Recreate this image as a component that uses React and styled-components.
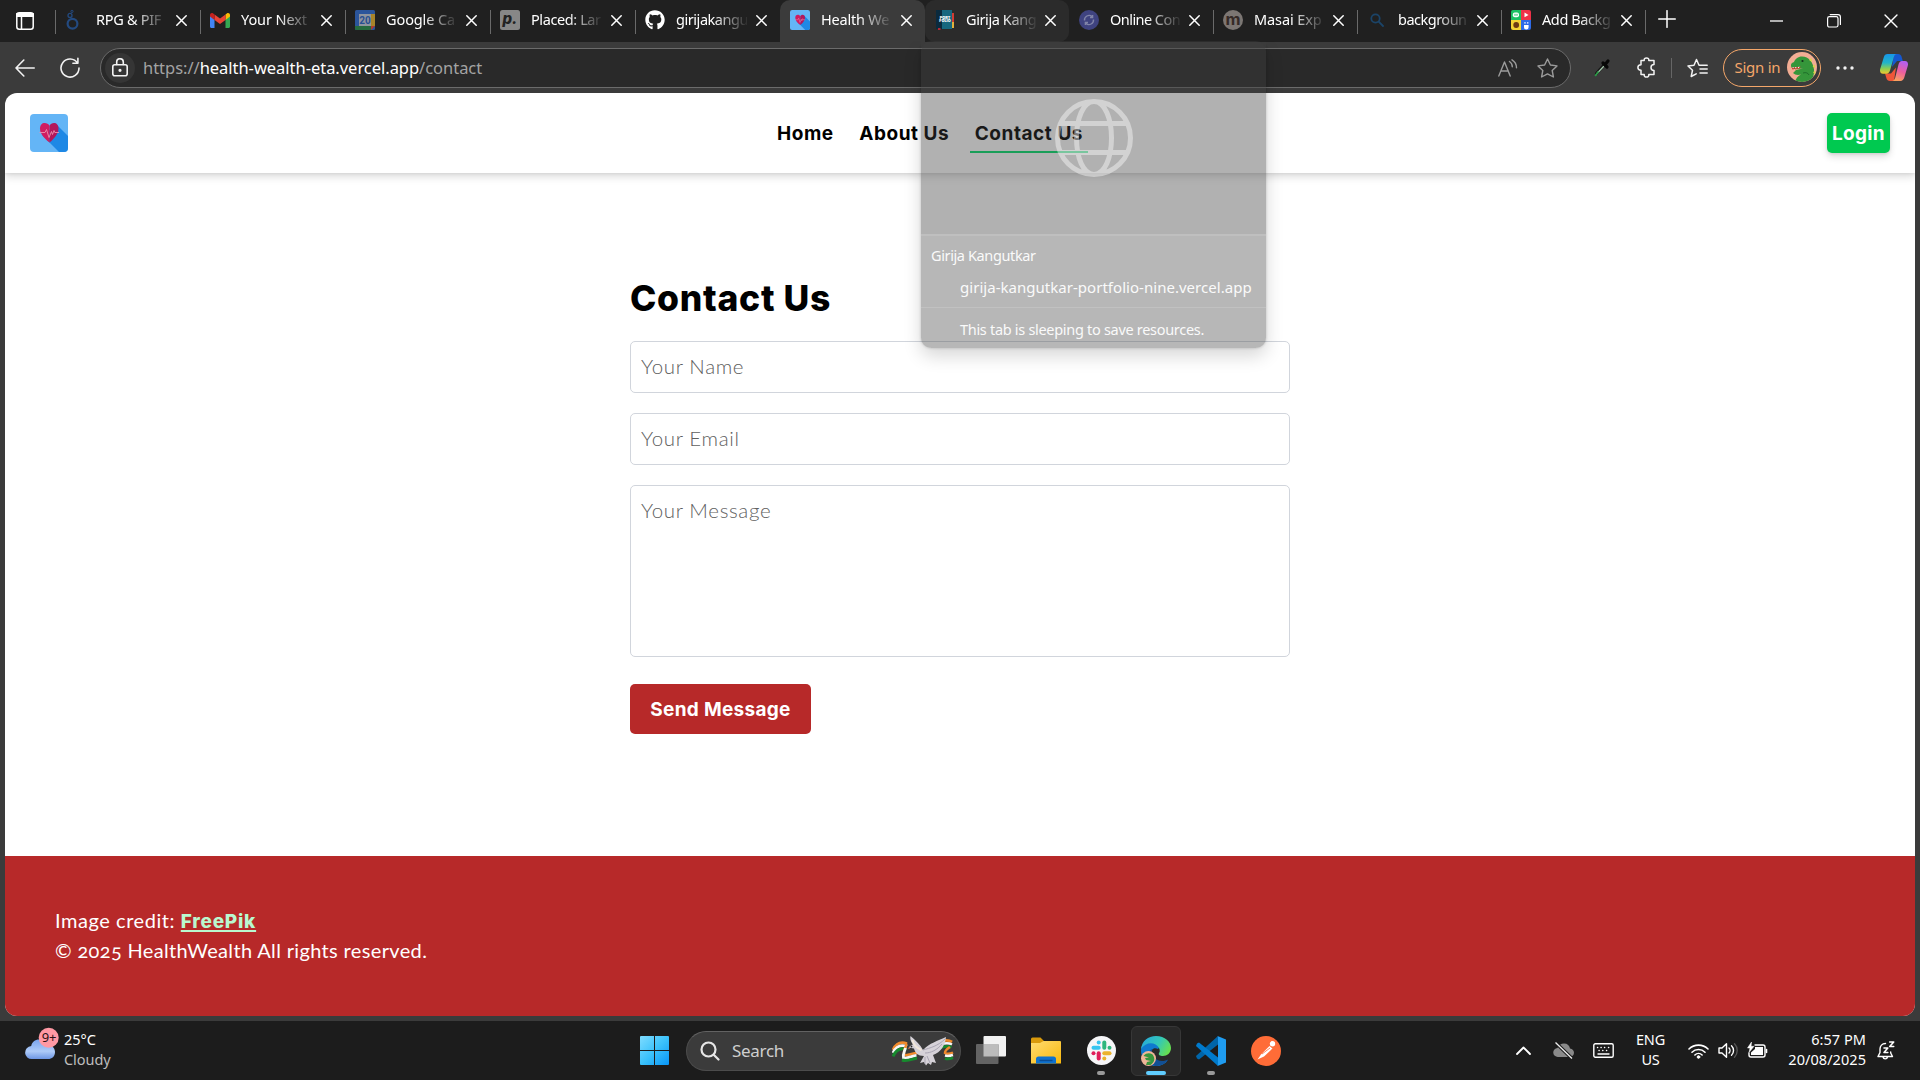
import React from "react";
import styled, { createGlobalStyle, css } from "styled-components";
import { FaGithub } from "react-icons/fa";

const ui = `"Noto Sans", "Open Sans", sans-serif`;
const display = `Inter, "Work Sans", sans-serif`;
const body = `Lato, Raleway, sans-serif`;

const Global = createGlobalStyle`
  * { box-sizing: border-box; }
  body { margin: 0; background: #3b3b3b; overflow: hidden; }
  svg { display: block; flex: none; }
`;

const Screen = styled.div`
  width: 1920px;
  height: 1080px;
  display: flex;
  flex-direction: column;
  overflow: hidden;
  position: relative;
  background: #3b3b3b;
  font-family: ${ui};
`;

/* ---------- tab strip ---------- */
const TabStrip = styled.div`
  height: 42px;
  flex: none;
  display: flex;
  background: #202020;
  color: #fff;
`;
const Slot = styled.div`
  width: ${(p) => p.$w}px;
  height: 100%;
  flex: none;
  display: flex;
  align-items: center;
  justify-content: center;
`;
const WorkspaceSlot = styled(Slot)`
  padding-right: 5px;
`;
const separator = css`
  background: linear-gradient(#6a6a6a, #6a6a6a) 0 10px / 1px 24px no-repeat;
`;
const Tab = styled.div`
  width: ${(p) => p.$w}px;
  flex: none;
  display: flex;
  align-items: center;
  padding: 0 13px 2px 10px;
  ${(p) => p.$line && separator}
  ${(p) =>
    p.$fill &&
    css`
      background: ${p.$fill};
      border-radius: ${p.$radius};
    `}
`;
const NewTab = styled(Slot)`
  ${separator}
  padding-bottom: 4px;
`;
const Favicon = styled.div`
  width: 20px;
  height: 20px;
  flex: none;
  display: flex;
  align-items: center;
  justify-content: center;
`;
const TabTitle = styled.div`
  width: 71px;
  margin: -2px 0 0 11px;
  white-space: nowrap;
  font-size: 14.5px;
  letter-spacing: ${(p) => p.$ls || "-0.2px"};
  line-height: 20px;
  mask-image: linear-gradient(90deg, #000 52%, rgba(0, 0, 0, 0.08) 98%);
`;
const TabClose = styled.div`
  margin-left: auto;
`;
const WindowControls = styled.div`
  margin-left: auto;
  display: flex;
`;

/* ---------- toolbar ---------- */
const Toolbar = styled.div`
  height: 51px;
  flex: none;
  display: flex;
  align-items: center;
  color: #f2f2f2;
`;
const AddressBar = styled.div`
  width: 1471px;
  height: 40px;
  flex: none;
  display: flex;
  align-items: center;
  border: 1px solid #6b6b6b;
  border-radius: 20px;
  background: #292929;
  padding: 0 3px 0 4px;
`;
const LockBadge = styled.div`
  width: 30px;
  height: 30px;
  border-radius: 50%;
  background: #353535;
  display: flex;
  align-items: center;
  justify-content: center;
`;
const Url = styled.div`
  margin-left: 8px;
  flex: 1;
  color: #a3a3a3;
  font-size: 16.5px;
  line-height: 24px;
  letter-spacing: -0.03px;
  white-space: nowrap;
  b {
    font-weight: 400;
    color: #fff;
  }
`;
const Divider = styled.div`
  width: 1px;
  height: 20px;
  background: #666;
`;
const SignIn = styled.div`
  width: 98px;
  height: 38px;
  border: 1.5px solid #f5a76a;
  border-radius: 19px;
  display: flex;
  align-items: center;
  justify-content: space-between;
  padding: 0 3px 1px 11px;
  color: #f5a76a;
  font-size: 15px;
  letter-spacing: -0.25px;
  white-space: nowrap;
`;

/* ---------- page ---------- */
const Viewport = styled.div`
  height: 923px;
  flex: none;
  margin: 0 5px;
  border-radius: 12px;
  overflow: hidden;
  background: #fff;
  display: flex;
  flex-direction: column;
`;
const NavBar = styled.header`
  height: 80px;
  flex: none;
  display: grid;
  grid-template-columns: 1fr auto 1fr;
  align-items: center;
  padding: 0 25px;
  box-shadow: 0 4px 8px rgba(0, 0, 0, 0.13), 0 1px 3px rgba(0, 0, 0, 0.08);
`;
const NavLinks = styled.nav`
  display: flex;
  gap: 15.5px;
  transform: translateX(-30px);
`;
const NavLink = styled.a`
  height: 40px;
  padding: 0 5px;
  font: 700 19px/41px ${display};
  letter-spacing: 0.55px;
  color: #000;
  border-bottom: 2px solid ${(p) => (p.$active ? "#00e06a" : "transparent")};
  white-space: nowrap;
`;
const LoginButton = styled.button`
  justify-self: end;
  width: 63px;
  height: 40px;
  border: 0;
  padding: 0;
  border-radius: 5px;
  background: #00c950;
  color: #fff;
  font: 700 19px ${display};
  letter-spacing: 0.3px;
  box-shadow: 0 4px 7px rgba(0, 0, 0, 0.13), 0 1px 3px rgba(0, 0, 0, 0.1);
`;
const Main = styled.main`
  height: 683px;
  flex: none;
  display: flex;
  flex-direction: column;
  width: 660px;
  margin: 0 auto;
  padding-top: 103px;
`;
const Heading = styled.h1`
  margin: 0 0 20px;
  height: 45px;
  font: 800 35.5px/45px ${display};
  letter-spacing: 0.7px;
  color: #000;
`;
const Form = styled.form`
  display: flex;
  flex-direction: column;
  gap: 20px;
`;
const field = css`
  width: 100%;
  border: 1px solid #d1d5dc;
  border-radius: 5px;
  padding: 0 10px 2px;
  background: #fff;
  outline: none;
  font: 300 20.5px/30px ${body};
  letter-spacing: 0.65px;
  resize: none;
  display: block;
  &::placeholder {
    color: #606060;
    opacity: 1;
  }
`;
const Input = styled.input`
  ${field}
  height: 52px;
`;
const TextArea = styled.textarea`
  ${field}
  height: 172px;
  padding-top: 9px;
`;
const SendButton = styled.button`
  margin-top: 7px;
  width: 181px;
  height: 50px;
  border: 0;
  border-radius: 5px;
  padding: 0;
  background: #b72929;
  color: #fff;
  font: 700 19px ${display};
  letter-spacing: 0.3px;
`;
const Footer = styled.footer`
  flex: 1;
  background: #b72929;
  color: #fff;
  padding: 49px 50px;
  font: 400 20px/30px ${body};
  p {
    margin: 0;
  }
`;
const Credit = styled.p`
  letter-spacing: 0.55px;
`;
const Rights = styled.p`
  line-height: 27px;
  letter-spacing: 0.35px;
  font-variant-numeric: oldstyle-nums;
`;
const CreditLink = styled.a`
  color: #b9f8cf;
  font: 800 19px/30px ${display};
  letter-spacing: 0.75px;
  text-decoration: underline;
  text-decoration-thickness: 2px;
  text-underline-offset: 2px;
`;

/* ---------- tab hover card ---------- */
const HoverCard = styled.aside`
  position: absolute;
  left: 921px;
  top: 41px;
  width: 345px;
  height: 307px;
  border-radius: 10px;
  overflow: hidden;
  display: flex;
  flex-direction: column;
  color: #fafafa;
  font-size: 14.5px;
  line-height: 20px;
  white-space: nowrap;
`;
const CardShadow = styled.div`
  position: absolute;
  left: 921px;
  top: 41px;
  width: 345px;
  height: 307px;
  border-radius: 10px;
  box-shadow: 0 8px 18px rgba(0, 0, 0, 0.16), 0 0 3px rgba(0, 0, 0, 0.2);
  clip-path: polygon(
    -40px 0, -40px 350px, 0 350px, 0 0, 345px 0, 345px 297px, 335px 307px,
    10px 307px, 0 297px, 0 350px, 390px 350px, 390px 0
  );
`;
const CardPreview = styled.div`
  height: 193px;
  flex: none;
  background: rgba(62, 62, 62, 0.404);
  display: flex;
  justify-content: center;
  padding-top: 58px;
`;
const CardInfo = styled.div`
  height: 73px;
  flex: none;
  background: rgba(77, 77, 77, 0.404);
  border-top: 2px solid rgba(255, 255, 255, 0.12);
  padding: 9px 0 0 10px;
`;
const CardTitle = styled.div`
  letter-spacing: -0.38px;
`;
const CardHost = styled.div`
  padding: 12px 0 0 29px;
  font-size: 15px;
  letter-spacing: 0.03px;
`;
const CardStatus = styled.div`
  flex: 1;
  background: rgba(77, 77, 77, 0.404);
  border-top: 1px solid rgba(255, 255, 255, 0.14);
  padding: 10.5px 0 0 39px;
  letter-spacing: -0.3px;
`;

/* ---------- taskbar ---------- */
const TaskBar = styled.div`
  height: 59px;
  margin-top: auto;
  flex: none;
  display: flex;
  align-items: center;
  background: #1c1c1c;
  color: #fff;
`;
const Weather = styled.div`
  width: 629px;
  height: 100%;
  flex: none;
  display: flex;
  padding: 5px 0 0 24px;
`;
const WeatherText = styled.div`
  margin-left: 3px;
  padding-top: 3px;
  font-size: 14.5px;
  line-height: 20.3px;
  letter-spacing: -0.05px;
  span {
    display: block;
    color: #bdbdbd;
  }
`;
const SearchBox = styled.div`
  width: 275px;
  height: 40px;
  margin: 0 5px 0 7px;
  border-radius: 20px;
  border: 1px solid #4c4c4c;
  border-top-color: #626262;
  background: #3b3b3b;
  display: flex;
  align-items: center;
  padding: 0 6px 0 13px;
  color: #cfcfcf;
  font-size: 17px;
  letter-spacing: -0.3px;
`;
const SearchLabel = styled.span`
  flex: 1;
  margin-left: 12px;
`;
const TaskApp = styled.div`
  width: 50px;
  height: 50px;
  margin-right: 5px;
  flex: none;
  display: flex;
  flex-direction: column;
  align-items: center;
  justify-content: space-between;
  padding-top: 9px;
  border-radius: 6px;
  border: 1px solid ${(p) => (p.$active ? "#373737" : "transparent")};
  background: ${(p) => (p.$active ? "#292929" : "transparent")};
`;
const Running = styled.div`
  width: ${(p) => (p.$active ? 20 : 8)}px;
  height: 4px;
  border-radius: 2px;
  background: ${(p) => (p.$active ? "#60cdff" : "#9a9a9a")};
`;
const Tray = styled.div`
  margin-left: auto;
  height: 100%;
  display: flex;
  align-items: center;
  padding-right: 14px;
`;
const Language = styled.div`
  width: 60px;
  padding: 0 5px 3px 0;
  text-align: center;
  font-size: 14.5px;
  line-height: 20px;
  letter-spacing: -0.2px;
`;
const Clock = styled.div`
  width: 93px;
  padding-bottom: 4px;
  text-align: right;
  font-size: 14.5px;
  line-height: 20px;
  letter-spacing: 0.05px;
  white-space: nowrap;
`;

/* ---------- drawings ---------- */
const line = (w = 1.5) => ({
  fill: "none",
  stroke: "currentColor",
  strokeWidth: w,
  strokeLinecap: "round",
  strokeLinejoin: "round",
});

const Cross = ({ size = 11, w = 1.5 }) => (
  <svg width={size} height={size} viewBox="0 0 11 11" {...line(w)}>
    <path d="M.8.8l9.4 9.4M10.2.8L.8 10.2" />
  </svg>
);

const HeartLogo = ({ size }) => (
  <svg width={size} height={size} viewBox="0 0 38 38">
    <clipPath id={"hl" + size}>
      <rect width="38" height="38" rx="4" />
    </clipPath>
    <g clipPath={"url(#hl" + size + ")"}>
      <rect width="38" height="38" fill="#64b5f6" />
      <path d="M27 11L38 22V38H29L12 21z" fill="#1e88e5" />
      <path d="M19.500 28.500C13 23.500 10 19 10 14.500 10 11 12 9 14.700 9c2 0 3.800 1 4.800 2.800z" fill="#d01c60" />
      <path d="M19.500 28.500c6-5 9-9.500 9-14C28.500 11 26.500 9 24 9c-2 0-3.600 1-4.500 2.800z" fill="#b3175b" />
      <path d="M9.500 18.500h5.500l1.500-3 2.500 8 2.500-6 1 3 1.500-4 .8 2H29" fill="none" stroke="#eb8fae" strokeWidth=".9" />
    </g>
  </svg>
);

const RingIcon = () => (
  <svg width="20" height="22" viewBox="0 0 20 22" fill="none" stroke="#234a80">
    <circle cx="7.500" cy="14.800" r="4.900" strokeWidth="2.200" />
    <circle cx="5" cy="6.400" r="2" strokeWidth="1.300" />
    <circle cx="7" cy="2.400" r="1.100" strokeWidth="1" />
  </svg>
);
const GmailIcon = () => (
  <svg width="20" height="15" viewBox="0 0 20 15">
    <path d="M0 2v11.500C0 14.300.6 15 1.500 15H4.500V6L0 2z" fill="#4285f4" />
    <path d="M20 2v11.500c0 .8-.6 1.500-1.500 1.500h-3V6L20 2z" fill="#34a853" />
    <path d="M15.500 1.500V7L20 3.600V2c0-1.700-1.800-2.500-3.200-1.500z" fill="#fbbc04" />
    <path d="M4.500 1.500V7L10 11l5.500-4V1.500L10 5.600z" fill="#ea4335" />
    <path d="M4.500 1.500V7L0 3.600V2C0 .3 1.800-.5 3.200.5z" fill="#c5221f" />
  </svg>
);
const CalendarIcon = () => (
  <svg width="20" height="20" viewBox="0 0 20 20">
    <rect width="20" height="20" rx="1.500" fill="#2b559b" />
    <rect x="16" y="4" width="4" height="12" fill="#a8842a" />
    <path d="M0 16h16v4H1.500A1.500 1.500 0 010 18.500z" fill="#266b3e" />
    <path d="M16 16h4l-4 4z" fill="#b43a2f" />
    <rect x="4" y="4" width="12" height="12" fill="#8f959f" />
    <text x="10" y="13.600" fontSize="10" fontWeight="700" fontFamily="Roboto, sans-serif" textAnchor="middle" fill="#274f92">20</text>
  </svg>
);
const PlacedIcon = () => (
  <svg width="20" height="20" viewBox="0 0 20 20">
    <rect width="20" height="20" rx="2.500" fill="#878787" />
    <text x="10" y="13.500" fontSize="15" fontWeight="800" fontStyle="italic" fontFamily="Inter, sans-serif" textAnchor="middle" fill="#222">p.</text>
  </svg>
);
const PortfolioIcon = () => (
  <svg width="19" height="20" viewBox="0 0 19 20">
    <rect width="10" height="19" fill="#0a2a3e" />
    <rect x="6" width="10" height="19" fill="#17677f" />
    <path d="M16 3h2v9h-2z" fill="#d23b33" />
    <path d="M16 12h2v6h-2z" fill="#e0b13d" />
    <rect x="2" y="18" width="2.500" height="2" fill="#b12a35" />
    <text x="9" y="8.600" fontSize="3.800" fontWeight="900" fontFamily="Inter, sans-serif" textAnchor="middle" fill="#fff">PORT</text>
    <text x="9" y="12.400" fontSize="3.800" fontWeight="900" fontFamily="Inter, sans-serif" textAnchor="middle" fill="#fff">FOLIO</text>
  </svg>
);
const SyncIcon = () => (
  <svg width="20" height="20" viewBox="0 0 20 20">
    <circle cx="10" cy="10" r="10" fill="#3f4380" />
    <path d="M5.500 10.500a4.600 4.600 0 017.500-4M14.500 9.500a4.600 4.600 0 01-7.500 4M11 7.500h2.600V5M9 12.500H6.400V15" fill="none" stroke="#8084a8" strokeWidth="1.400" />
  </svg>
);
const MasaiIcon = () => (
  <svg width="20" height="20" viewBox="0 0 20 20">
    <circle cx="10" cy="10" r="10" fill="#7c7673" />
    <text x="10" y="14.800" fontSize="16.500" fontWeight="700" fontFamily="Inter, sans-serif" textAnchor="middle" fill="#352a27">m</text>
  </svg>
);
const BlueSearch = () => (
  <svg width="14" height="14" viewBox="0 0 14 14" fill="none" stroke="#1b4468" strokeWidth="1.800" strokeLinecap="round">
    <circle cx="5.500" cy="5.500" r="4.200" />
    <path d="M8.700 8.700L13 13" />
  </svg>
);
const QuadIcon = () => (
  <svg width="20" height="20" viewBox="0 0 20 20">
    <path d="M0 2a2 2 0 012-2h8v10H0z" fill="#1bc063" />
    <path d="M10 0H18a2 2 0 012 2v8H10z" fill="#ef3148" />
    <path d="M0 10h10V20H2a2 2 0 01-2-2z" fill="#f3d435" />
    <path d="M10 10H20V18a2 2 0 01-2 2h-8z" fill="#2f6be8" />
    <rect x="1.800" y="2.500" width="6.200" height="4.800" rx="2" fill="#fff" />
    <path d="M4 3.800v2M6 3.800v2" stroke="#1bc063" />
    <path d="M13.500 2.500v4.700l4-2.300z" fill="#fff" />
    <circle cx="5.200" cy="15" r="2.900" fill="#6b3a13" />
    <path d="M13 15h4.600v2.300a2.300 2.300 0 01-4.600 0zM13.300 12.300h1.400v1.300h-1.400zM16 12.300h1.400v1.300H16z" fill="#fff" />
  </svg>
);

const Dino = ({ size }) => (
  <svg width={size} height={size} viewBox="0 0 30 30">
    <clipPath id={"dn" + size}>
      <circle cx="15" cy="15" r="15" />
    </clipPath>
    <g clipPath={"url(#dn" + size + ")"}>
      <rect width="30" height="30" fill="#f2ad94" />
      <path d="M7 10c1-3 4-5.500 8-5.500 7 0 11 6 12 13 .5 5-1 9-4 12.500H8c1-4 3-6 6-7.500-3 1-6 .5-8-1.500l3-3 7-1.500-9 .5c-3-1-4-4-2-6z" fill="#35963a" />
      <path d="M5 15.500l1 1.800 1.500-2 1.300 2 1.400-2.300 1.500 2 1.400-2.300" fill="#fff" stroke="#d6372c" strokeWidth="1" />
      <circle cx="15.500" cy="9" r="1.100" fill="#14301a" />
      <path d="M22 8l2.500-2 .5 4zM25.500 14l2.500-1.500v4zM26 20l2.500-1-.5 4z" fill="#d9d54a" />
      <path d="M16 21c3-1 5 0 6 2" fill="none" stroke="#1f6f2a" />
    </g>
  </svg>
);

const CopilotIcon = () => (
  <svg width="28" height="27" viewBox="0 0 28 27">
    <defs>
      <linearGradient id="cpA" x1="0" y1="0" x2="0" y2="1">
        <stop offset="0" stopColor="#1795e8" />
        <stop offset=".45" stopColor="#22b5c9" />
        <stop offset=".75" stopColor="#8fcf50" />
        <stop offset="1" stopColor="#f0c52f" />
      </linearGradient>
      <linearGradient id="cpB" x1=".6" y1="0" x2=".3" y2="1">
        <stop offset="0" stopColor="#b45ff0" />
        <stop offset=".5" stopColor="#ec5f9e" />
        <stop offset="1" stopColor="#fba35c" />
      </linearGradient>
    </defs>
    <path d="M14 0h4c2 0 3 1 3.500 2.500L22.800 7H17l-5 6z" fill="#1557cf" />
    <path d="M14 27h-4c-2 0-3-1-3.500-2.500L5 19.500h6l5-6z" fill="#ef5638" />
    <path d="M7.500 0H17c-1.700 0-2.600 1.200-3.200 3.200L10 16.500c-.6 2-1.700 3.200-3.500 3.200H3C.6 19.700-.5 17.500.2 15L3.800 3.200C4.400 1.200 5.600 0 7.500 0z" fill="url(#cpA)" />
    <path d="M20.500 27H12c1.700 0 2.600-1.200 3.200-3.200L18.500 10.500c.6-2 1.700-3.500 3.500-3.500h3c2.400 0 3.500 2.200 2.800 4.700L24.200 23.800C23.600 25.800 22.400 27 20.500 27z" fill="url(#cpB)" />
  </svg>
);

const CloudIcon = () => (
  <svg width="37" height="34" viewBox="0 0 37 34">
    <defs>
      <linearGradient id="cl" x1="0" y1="0" x2="0" y2="1">
        <stop offset="0" stopColor="#79a3ec" />
        <stop offset=".6" stopColor="#aecbf8" />
        <stop offset="1" stopColor="#6d96e4" />
      </linearGradient>
    </defs>
    <path d="M8 33a6.500 6.500 0 01-.8-13C8 16 11 13.500 15 13.500c3.500 0 6.500 2 7.500 5 5 .2 8.500 3 8.500 7.500s-3 7-7 7z" fill="url(#cl)" />
    <circle cx="24.700" cy="11.700" r="10" fill="#ff99a4" />
    <text x="25" y="16.200" fontSize="13" fontFamily={ui} letterSpacing="-.3" textAnchor="middle" fill="#2a1215">9+</text>
  </svg>
);

const WindowsIcon = () => (
  <svg width="29" height="29" viewBox="0 0 29 29">
    <linearGradient id="wn" gradientUnits="userSpaceOnUse" x1="0" y1="0" x2="29" y2="29">
      <stop offset="0" stopColor="#7fdcff" />
      <stop offset=".5" stopColor="#3cc2fb" />
      <stop offset="1" stopColor="#0896f7" />
    </linearGradient>
    <path d="M1 0h13v14H0V1a1 1 0 011-1zM15 0h13a1 1 0 011 1v13H15zM0 15h14v14H1a1 1 0 01-1-1zM15 15h14v13a1 1 0 01-1 1H15z" fill="url(#wn)" />
  </svg>
);

const DoveIcon = () => (
  <svg width="62" height="31" viewBox="0 0 62 31" fill="none">
    <path d="M1 15C4 8 9 6.500 15 8.500" stroke="#f08a2c" strokeWidth="2.800" />
    <path d="M1 18C4 11 9 9.500 15 11.500" stroke="#f7f7f7" strokeWidth="2.800" />
    <path d="M1 21.500C4 14.500 9 12.500 14.500 14.500" stroke="#178a2e" strokeWidth="3" />
    <path d="M14.500 8.500c-1 5-4 8-2 11.500 4 1 7-2 13-2" stroke="#f08a2c" strokeWidth="2.500" />
    <path d="M13.500 13c-1 4-3 6-2 10 4 1 8-2 13-2.500" stroke="#f7f7f7" strokeWidth="2.800" />
    <path d="M10 25c5 2 10-1 15-2" stroke="#178a2e" strokeWidth="3" />
    <path d="M49 6.500c4-1.500 8-1.500 11 .5" stroke="#f08a2c" strokeWidth="2.800" />
    <path d="M49 9.500c4-1.500 8-1.500 11 0" stroke="#f7f7f7" strokeWidth="2.500" />
    <path d="M49 12.500c4-1.500 7-1.500 10.500-.5" stroke="#178a2e" strokeWidth="2.800" />
    <path d="M58 12c-3 2-5 3-5 6 2 1 5 1 8-.5" stroke="#f08a2c" strokeWidth="2.500" />
    <path d="M53 20.500c3 .8 5 .5 8-.5" stroke="#f7f7f7" strokeWidth="2.500" />
    <path d="M53 23.500c3 1 5 .5 8-.8" stroke="#178a2e" strokeWidth="2.800" />
    <path d="M18.500 1c5 4 10 9 12.500 14C38 8 45 6 54 2c-1 9-5 15-13 18l3 8-4-1-1 3-3-2-2 2.500-2-3.500-4 1 4-7c-6 0-9-3-10-7.500l-5.500-1 3-2.500c2-1.200 3-.5 3.500.5C20 9 17.500 5 18.500 1z" fill="#d6d2d8" />
    <path d="M31 15c7-2 15-4 22-11M33 18c6 0 12-3 17-9M35 21l3 7M33 22v7" stroke="#a9a5b3" strokeWidth="1" />
    <path d="M20.500 5c1 5 4 8 9 10" stroke="#f1e7da" strokeWidth="2" />
    <circle cx="19.500" cy="11.500" r=".9" fill="#222" />
    <path d="M17.500 12.200l-2 1.700 2.500-.3z" fill="#e06a3a" />
  </svg>
);

const TaskViewIcon = () => (
  <svg width="30" height="28" viewBox="0 0 30 28">
    <rect x="7.500" width="22.500" height="20.500" rx="1" fill="#f1f1f1" />
    <rect y="8" width="22.500" height="20" rx="1" fill="#636363" />
    <path d="M7.500 8h15v12.500h-15z" fill="#bcbcbc" />
  </svg>
);
const FolderIcon = () => (
  <svg width="30" height="28" viewBox="0 0 30 28">
    <linearGradient id="fd" x1="0" y1="0" x2="1" y2="1">
      <stop offset="0" stopColor="#ffdc71" />
      <stop offset="1" stopColor="#f9b90d" />
    </linearGradient>
    <path d="M0 3a1.500 1.500 0 011.500-1.500h8L13 5h16v5H0z" fill="#d99a0c" />
    <path d="M0 7h9l3.500-2H29a1 1 0 011 1v21.500H0z" fill="url(#fd)" />
    <path d="M5 27.500V23a2.500 2.500 0 012.500-2.500h15A2.500 2.500 0 0125 23v4.500z" fill="#0f72cf" />
    <path d="M8.500 24.500h13" stroke="#0a4d96" strokeWidth="1.500" />
  </svg>
);
const SlackIcon = () => (
  <svg width="29" height="29" viewBox="0 0 29 29">
    <circle cx="14.500" cy="14.500" r="14.500" fill="#f6f6f8" />
    <g strokeWidth="4" strokeLinecap="round">
      <path d="M6.500 11.700h5.200" stroke="#36c5f0" />
      <path d="M17.300 6.500v5.200" stroke="#2eb67d" />
      <path d="M11.700 17.300v5.200" stroke="#e01e5a" />
      <path d="M17.300 17.300h5.200" stroke="#ecb22e" />
      <path d="M11.700 6.500h0" stroke="#36c5f0" />
      <path d="M22.500 11.700h0" stroke="#2eb67d" />
      <path d="M6.500 17.300h0" stroke="#e01e5a" />
      <path d="M17.300 22.500h0" stroke="#ecb22e" />
    </g>
  </svg>
);
const EdgeIcon = () => (
  <svg width="30" height="30" viewBox="0 0 30 30">
    <defs>
      <linearGradient id="eg" x1="0" y1=".2" x2="1" y2=".6">
        <stop offset="0" stopColor="#26a8dd" />
        <stop offset=".55" stopColor="#33c7b8" />
        <stop offset="1" stopColor="#67e04f" />
      </linearGradient>
    </defs>
    <path d="M0 15C0 6 7 4 14 6c5 1 5 5 3 7-2-1-5-1-6 1-3 4 3 11 8 12 3 .8 6-.2 8-2-3 4-7 6-12 6C7 30 0 23 0 15z" fill="#0f79cf" />
    <path d="M11 13c-2 6 4 12 10 12 2.500 0 4.500-.6 6-1.500C25 27.500 20 30 14 30 10 28 8 24 8 19c0-3 1-5 3-6z" fill="#124f94" />
    <path d="M0 13C1 5 7 0 15 0c9 0 15 6 15 12 0 5-4 8-8 8-3 0-5-1-4-3 1-1 1-3 0-5C15 6 5 5 0 13z" fill="url(#eg)" />
    <circle cx="7.500" cy="22.500" r="7.500" fill="#efb598" />
    <path d="M2.500 20c3-4 9-3 10 0 2 4 0 7-3 9H5l1-3 4-1-5-1-1-2 4-.5z" fill="#36963c" />
  </svg>
);
const VsCodeIcon = () => (
  <svg width="30" height="30" viewBox="0 0 30 30">
    <path d="M22 0L0 20l1 2.500 2 1L22 8.500z" fill="#0065a9" />
    <path d="M22 30L0 10l1-2.500 2-1L22 21.500z" fill="#007acc" />
    <path d="M21.500 0L30 3.500v23L21.500 30c.4-.5.500-1 .5-2V2c0-1-.1-1.500-.5-2z" fill="#1f9cf0" />
  </svg>
);
const PostmanIcon = () => (
  <svg width="30" height="30" viewBox="0 0 30 30">
    <circle cx="15" cy="15" r="15" fill="#ff6c37" />
    <circle cx="21.500" cy="7.800" r="2.700" fill="#fff" />
    <path d="M18.500 10l3 2.500-8.500 8-6.500 3 3.500-5z" fill="#fff" />
    <path d="M11 18l8-6" stroke="#ff6c37" strokeWidth=".8" />
  </svg>
);

const GlobeIcon = () => (
  <svg width="78" height="78" viewBox="0 0 78 78" fill="none" stroke="#fff" strokeOpacity=".42" strokeWidth="5">
    <path d="M39 2.500A36.500 36.500 0 1139 75.500 36.500 36.500 0 0139 2.500zM39 2.500C28 2.500 21.500 20 21.500 39S28 75.500 39 75.500 56.500 58 56.500 39 50 2.500 39 2.500zM6 24.500h66M6 53.500h66" />
  </svg>
);

const ACTIVE = "#3b3b3b";
const HOVERED = "#2b2b2b";
const tabs = [
  { t: "RPG & PIF", icon: <RingIcon />, line: true, ls: "-0.3px" },
  { t: "Your Next", icon: <GmailIcon />, line: true, ls: "-0.1px" },
  { t: "Google Ca", icon: <CalendarIcon />, line: true, ls: "-0.1px" },
  { t: "Placed: Lar", icon: <PlacedIcon />, line: true, ls: "-0.4px" },
  { t: "girijakangu", icon: <FaGithub size={20} />, line: true, ls: "-0.45px" },
  { t: "Health We", icon: <HeartLogo size={20} />, fill: ACTIVE, radius: "10px 10px 0 0" },
  { t: "Girija Kang", icon: <PortfolioIcon />, fill: HOVERED, radius: "10px", ls: "-0.4px" },
  { t: "Online Con", icon: <SyncIcon />, ls: "-0.55px" },
  { t: "Masai Exp", icon: <MasaiIcon />, line: true, ls: "-0.1px" },
  { t: "backgroun", icon: <BlueSearch />, line: true, ls: "-0.5px" },
  { t: "Add Backg", icon: <QuadIcon />, line: true, ls: "-0.4px" },
];

export default function App() {
  return (
    <Screen>
      <Global />
      <TabStrip>
        <WorkspaceSlot $w={55}>
          <svg width="18" height="18" viewBox="0 0 18 18" {...line(1.5)}>
            <rect x=".8" y=".8" width="16.400" height="16.400" rx="2.500" />
            <path d="M1 3h16" strokeWidth="4" />
            <path d="M5.500 4v13" />
          </svg>
        </WorkspaceSlot>
        {tabs.map((x, i) => (
          <Tab key={x.t} $w={i < 6 ? 145 : 144} $line={x.line} $fill={x.fill} $radius={x.radius}>
            <Favicon>{x.icon}</Favicon>
            <TabTitle $ls={x.ls}>{x.t}</TabTitle>
            <TabClose>
              <Cross />
            </TabClose>
          </Tab>
        ))}
        <NewTab $w={44}>
          <svg width="18" height="18" viewBox="0 0 18 18" {...line(1.5)}>
            <path d="M9 .7v16.600M.7 9h16.600" />
          </svg>
        </NewTab>
        <WindowControls>
          <Slot $w={57}>
            <svg width="13" height="2" viewBox="0 0 13 2">
              <path d="M0 1h13" stroke="#fff" strokeWidth="1.300" />
            </svg>
          </Slot>
          <Slot $w={57}>
            <svg width="14" height="14" viewBox="0 0 14 14" {...line(1.2)}>
              <rect x=".6" y="2.600" width="10.400" height="10.400" rx="1.800" />
              <path d="M3.200.6H11A2.400 2.400 0 0113.400 3v7.500" />
            </svg>
          </Slot>
          <Slot $w={58}>
            <Cross size={14} w={1.1} />
          </Slot>
        </WindowControls>
      </TabStrip>

      <Toolbar>
        <Slot $w={50}>
          <svg width="20" height="18" viewBox="0 0 20 18" {...line(1.6)}>
            <path d="M19.200 9H1M8.800 1L1 9l7.800 8" />
          </svg>
        </Slot>
        <Slot $w={50}>
          <svg width="30" height="22" viewBox="0 0 30 22" {...line(1.6)}>
            <path d="M17.600 6.200A9 9 0 1019 11M17.900 1.300v5h-5" />
          </svg>
        </Slot>
        <AddressBar>
          <LockBadge>
            <svg width="16" height="19" viewBox="0 0 16 19" {...line(1.6)}>
              <rect x=".8" y="6.800" width="14.400" height="11" rx="2" />
              <path d="M4.700 6.500V4a3.300 3.300 0 016.600 0v2.500" />
              <circle cx="8" cy="12.300" r=".8" fill="currentColor" />
            </svg>
          </LockBadge>
          <Url>
            https://<b>health-wealth-eta.vercel.app</b>/contact
          </Url>
          <Slot $w={38}>
            <svg width="20" height="18" viewBox="0 0 20 18" {...line(1.4)} color="#9b9b9b">
              <path d="M.8 17L6.500 3l5.700 14M2.800 12h7.500M11.500 2.500c2 1.300 2.800 3 2.800 5.300M14 .8c3 1.800 4.500 4.300 4.500 8" />
            </svg>
          </Slot>
          <Slot $w={40}>
            <svg width="21" height="20" viewBox="0 0 21 20" {...line(1.4)} color="#9b9b9b">
              <path d="M10.500 1l2.900 6 6.600.9-4.800 4.600 1.200 6.500-5.900-3.100L4.600 19l1.200-6.500L1 7.900 7.600 7z" />
            </svg>
          </Slot>
        </AddressBar>
        <Slot $w={62}>
          <svg width="17" height="19" viewBox="0 0 17 19">
            <path d="M2.500 15.500L10 7" stroke="#141414" strokeWidth="3" strokeLinecap="round" />
            <path d="M3 15.500L10 8" stroke="#a9cdb0" strokeWidth="1.200" />
            <path d="M1.200 18L4.500 13.500" stroke="#2c9a48" strokeWidth="1.800" />
            <path d="M9 5l4 4M11.500 6L14 3" stroke="#070707" strokeWidth="3.200" strokeLinecap="round" />
          </svg>
        </Slot>
        <Slot $w={28}>
          <svg width="20" height="21" viewBox="0 0 20 21" {...line(1.5)}>
            <path d="M4 3.500h3.200C7 1.800 8 .9 9.500.9S12 1.800 11.800 3.500H17v4c-2 0-3 1-3 3s1 3 3 3v4h-5.200c.2 1.700-.8 2.600-2.300 2.600s-2.500-.9-2.300-2.600H4v-4.300C2 13.200.9 12 .9 10.500S2 8 4 7.800z" />
          </svg>
        </Slot>
        <Slot $w={21}>
          <Divider />
        </Slot>
        <Slot $w={30}>
          <svg width="21" height="20" viewBox="0 0 21 20" {...line(1.5)}>
            <path d="M13 7.200h-1L9.500 1.500 7 7.200 1 8l4.500 4.300L4.200 18.500l5-2.700M13 7.200h7.200M13 11h7.200M13 15h7.200" />
          </svg>
        </Slot>
        <Slot $w={119}>
          <SignIn>
            Sign in
            <Dino size={30} />
          </SignIn>
        </Slot>
        <Slot $w={27}>
          <svg width="18" height="4" viewBox="0 0 18 4" fill="#f2f2f2">
            <circle cx="2" cy="2" r="1.700" />
            <circle cx="9" cy="2" r="1.700" />
            <circle cx="16" cy="2" r="1.700" />
          </svg>
        </Slot>
        <Slot $w={71}>
          <CopilotIcon />
        </Slot>
      </Toolbar>

      <Viewport>
        <NavBar>
          <HeartLogo size={38} />
          <NavLinks>
            <NavLink>Home</NavLink>
            <NavLink>About Us</NavLink>
            <NavLink $active>Contact Us</NavLink>
          </NavLinks>
          <LoginButton>Login</LoginButton>
        </NavBar>
        <Main>
          <Heading>Contact Us</Heading>
          <Form>
            <Input placeholder="Your Name" />
            <Input placeholder="Your Email" />
            <TextArea placeholder="Your Message" />
            <SendButton type="button">Send Message</SendButton>
          </Form>
        </Main>
        <Footer>
          <Credit>
            Image credit: <CreditLink>FreePik</CreditLink>
          </Credit>
          <Rights>© 2025 HealthWealth All rights reserved.</Rights>
        </Footer>
      </Viewport>

      <TaskBar>
        <Weather>
          <CloudIcon />
          <WeatherText>
            25°C
            <span>Cloudy</span>
          </WeatherText>
        </Weather>
        <Slot $w={50}>
          <WindowsIcon />
        </Slot>
        <SearchBox>
          <svg width="20" height="20" viewBox="0 0 20 20" fill="none" stroke="#e6e6e6" strokeWidth="2.200" strokeLinecap="round">
            <circle cx="8.500" cy="8.500" r="7" />
            <path d="M13.700 13.700L18.500 18.500" />
          </svg>
          <SearchLabel>Search</SearchLabel>
          <DoveIcon />
        </SearchBox>
        <TaskApp><TaskViewIcon /></TaskApp>
        <TaskApp><FolderIcon /></TaskApp>
        <TaskApp><SlackIcon /><Running /></TaskApp>
        <TaskApp $active><EdgeIcon /><Running $active /></TaskApp>
        <TaskApp><VsCodeIcon /><Running /></TaskApp>
        <TaskApp><PostmanIcon /></TaskApp>
        <Tray>
          <Slot $w={40}>
            <svg width="15" height="9" viewBox="0 0 15 9" {...line(1.8)}>
              <path d="M1 8l6.500-6.500L14 8" />
            </svg>
          </Slot>
          <Slot $w={40}>
            <svg width="21" height="17" viewBox="0 0 21 17">
              <path d="M5 15a4.500 4.500 0 01-.5-9C5.500 3 8 1.500 11 1.500c3.500 0 5.500 2 6 5 2.500.3 4 2 4 4.300S19 15 16.500 15z" fill="#8a8a8a" />
              <path d="M2.500.5l16.500 16" stroke="#1c1c1c" strokeWidth="3.500" />
              <path d="M2.500.5l16.500 16" stroke="#eee" strokeWidth="1.300" />
            </svg>
          </Slot>
          <Slot $w={40}>
            <svg width="21" height="15" viewBox="0 0 21 15" {...line(1.4)}>
              <rect x=".8" y=".8" width="19.400" height="13.400" rx="1.500" />
              <path d="M4.500 4.500h.2M8 4.500h.2M11.500 4.500h.2M15.500 4.500h.2M6 7.500h.2M9.700 7.500h.2M13.500 7.500h.2M5 11h11" />
            </svg>
          </Slot>
          <Language>
            ENG
            <br />
            US
          </Language>
          <Slot $w={30}>
            <svg width="21" height="16" viewBox="0 0 21 16" {...line(1.6)}>
              <path d="M1 6a13.500 13.500 0 0119 0M4 9.200a9.200 9.200 0 0113 0M6.900 12a5.200 5.200 0 017.200 0" />
              <circle cx="10.500" cy="14" r="1.300" fill="currentColor" strokeWidth="1" />
            </svg>
          </Slot>
          <Slot $w={29}>
            <svg width="20" height="17" viewBox="0 0 20 17" {...line(1.4)}>
              <path d="M1 6v5h3l4.500 4.200V1.800L4 6zM11 6c1.300 1.300 1.300 3.700 0 5M13.500 3.800c2.700 2.700 2.700 6.700 0 9.400" />
              <path d="M16.500 1.800c3.600 3.600 3.600 9.800 0 13.400" stroke="#555" />
            </svg>
          </Slot>
          <Slot $w={31}>
            <svg width="21" height="17" viewBox="0 0 21 17" {...line(1.4)}>
              <path d="M8 3h8a2 2 0 012 2v8a2 2 0 01-2 2H4a2 2 0 01-2-2v-2M19.600 7.500v3" />
              <path d="M8 5h8v8H4v-2.500L8 7z" fill="currentColor" stroke="none" />
              <path d="M4.500 0L.5 6h2.500l-1 4.500L7 4.300H4.200z" fill="currentColor" strokeWidth=".5" />
            </svg>
          </Slot>
          <Clock>
            6:57 PM
            <br />
            20/08/2025
          </Clock>
          <Slot $w={40}>
            <svg width="18" height="19" viewBox="0 0 18 19" {...line(1.4)}>
              <path d="M8.500 2.500C5 2.500 3 5 3 8v3.500L1 15.500h14.500l-1.800-3.500v-1M6 16c.5 2.500 4 2.500 4.500 0" />
              <path d="M12.700 1h4l-4 4.500h4M7 7h3.800L7 11.500h3.800" strokeWidth="1.600" />
            </svg>
          </Slot>
        </Tray>
      </TaskBar>

      <CardShadow />
      <HoverCard>
        <CardPreview>
          <GlobeIcon />
        </CardPreview>
        <CardInfo>
          <CardTitle>Girija Kangutkar</CardTitle>
          <CardHost>girija-kangutkar-portfolio-nine.vercel.app</CardHost>
        </CardInfo>
        <CardStatus>This tab is sleeping to save resources.</CardStatus>
      </HoverCard>
    </Screen>
  );
}
